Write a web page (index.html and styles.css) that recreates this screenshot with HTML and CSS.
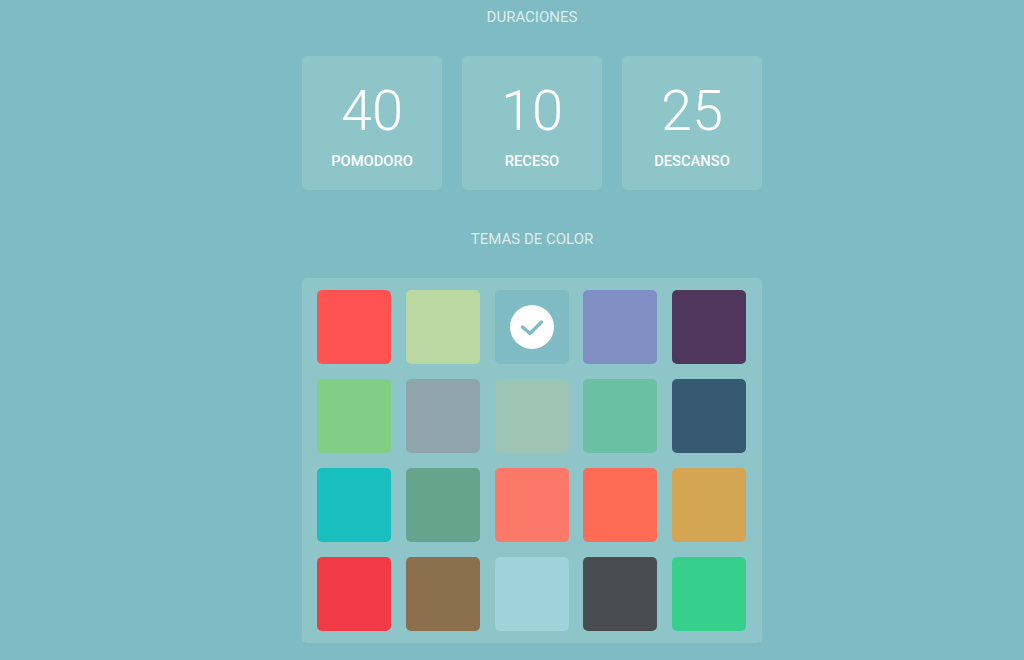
FILE: index.html
```html
<!DOCTYPE html>
<html lang="es">
<head>
    <meta charset="UTF-8">
    <title>Ajustes</title>
    <link rel="stylesheet" href="styles.css">
</head>
<body>
    <div class="container">
        <h4 class="section-title title-durations">DURACIONES</h4>
        <div class="durations">
            <div class="duration">
                <span class="value">40</span>
                <span class="label">POMODORO</span>
            </div>
            <div class="duration">
                <span class="value">10</span>
                <span class="label">RECESO</span>
            </div>
            <div class="duration">
                <span class="value">25</span>
                <span class="label">DESCANSO</span>
            </div>
        </div>

        <h4 class="section-title title-themes">TEMAS DE COLOR</h4>
        <div class="themes">
            <div class="theme theme-red"></div>
            <div class="theme theme-lime"></div>
            <div class="theme theme-current">
                <svg class="check" width="44" height="44" viewBox="0 0 44 44">
                    <circle cx="22" cy="22" r="22" fill="#fff"/>
                    <path d="M12.5 22 L20 28.5 L31.5 17" fill="none" stroke="#7fbbc2" stroke-width="3.4" stroke-linecap="round" stroke-linejoin="round"/>
                </svg>
            </div>
            <div class="theme theme-periwinkle"></div>
            <div class="theme theme-plum"></div>

            <div class="theme theme-green"></div>
            <div class="theme theme-gray"></div>
            <div class="theme theme-sage"></div>
            <div class="theme theme-mint"></div>
            <div class="theme theme-navy"></div>

            <div class="theme theme-teal"></div>
            <div class="theme theme-moss"></div>
            <div class="theme theme-salmon"></div>
            <div class="theme theme-coral"></div>
            <div class="theme theme-mustard"></div>

            <div class="theme theme-crimson"></div>
            <div class="theme theme-brown"></div>
            <div class="theme theme-sky"></div>
            <div class="theme theme-charcoal"></div>
            <div class="theme theme-emerald"></div>
        </div>
    </div>
</body>
</html>
```

FILE: styles.css
```css
html, body {
    margin: 0;
    height: 100%;
    overflow: hidden;
}
body {
    padding-left: 40px;
    background-color: #7fbbc2;
    color: #fff;
    font-family: Roboto, "Liberation Sans", sans-serif;
}
.container {
    width: 460px;
    margin: 0 auto;
}
.section-title {
    margin: 0;
    text-align: center;
    font-size: 15px;
    font-weight: 400;
    line-height: 20px;
    color: rgba(255, 255, 255, 0.75);
}
.title-durations {
    padding-top: 7px;
    margin-bottom: 29px;
}
.title-themes {
    margin-top: 39px;
    margin-bottom: 29px;
}
.durations {
    display: flex;
    justify-content: space-between;
}
.duration {
    width: 140px;
    height: 134px;
    display: flex;
    flex-direction: column;
    align-items: center;
    background-color: #8ec5c8;
    border-radius: 5px;
}
.value {
    margin-top: 23px;
    font-size: 56px;
    font-weight: 300;
    line-height: 64px;
}
.label {
    margin-top: 8px;
    font-size: 14.7px;
    font-weight: 500;
    line-height: 20px;
}
.themes {
    display: grid;
    grid-template-columns: repeat(5, 74px);
    justify-content: space-between;
    row-gap: 14.75px;
    height: 365px;
    box-sizing: border-box;
    padding: 12.3px 15.8px 12.3px 15.2px;
    background-color: #8ec5c8;
    border-radius: 5px;
}
.theme {
    height: 74px;
    display: flex;
    align-items: center;
    justify-content: center;
    border-radius: 5px;
}
.theme-red { background-color: #ff5252; }
.theme-lime { background-color: #bbd8a2; }
.theme-current { background-color: #7fbbc2; }
.theme-periwinkle { background-color: #7f8ec4; }
.theme-plum { background-color: #4e365c; }
.theme-green { background-color: #81cf87; }
.theme-gray { background-color: #8fa5a9; }
.theme-sage { background-color: #9ec4b5; }
.theme-mint { background-color: #6bbfa3; }
.theme-navy { background-color: #375a73; }
.theme-teal { background-color: #19bfbf; }
.theme-moss { background-color: #66a48e; }
.theme-salmon { background-color: #fc7869; }
.theme-coral { background-color: #ff6c56; }
.theme-mustard { background-color: #d4a653; }
.theme-crimson { background-color: #f23a47; }
.theme-brown { background-color: #8c704d; }
.theme-sky { background-color: #a0d2dc; }
.theme-charcoal { background-color: #4a4c50; }
.theme-emerald { background-color: #36d08c; }
```
